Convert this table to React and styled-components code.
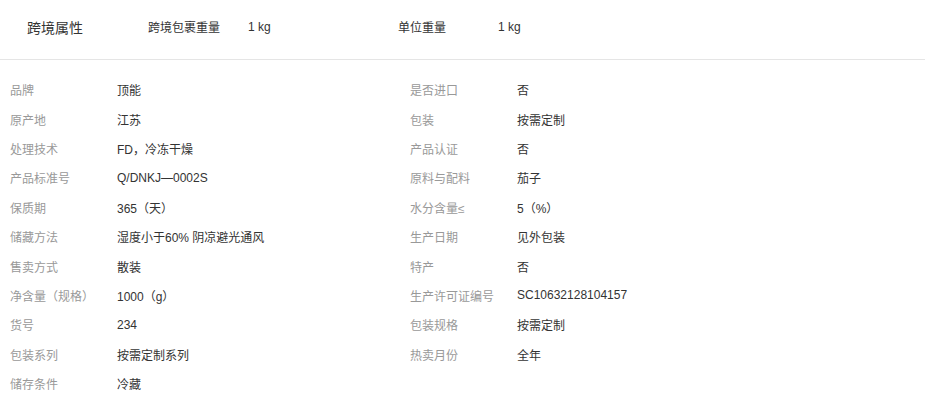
import React from "react";
import styled, { createGlobalStyle } from "styled-components";

const GlobalStyle = createGlobalStyle`
  body {
    margin: 0;
    background: #fff;
    font-family: "Liberation Sans", Arial, "Noto Sans CJK SC", sans-serif;
    color: #333;
  }
`;

const Page = styled.div`
  width: 925px;
`;

const Header = styled.div`
  height: 60px;
  box-sizing: border-box;
  display: flex;
  align-items: center;
  padding: 0 0 6px 27px;
  border-bottom: 1px solid #e5e5e5;
  font-size: 12px;
`;

const Title = styled.div`
  width: 121px;
  font-size: 14px;
  color: #333;
`;

const HeaderLabel = styled.div`
  width: 100px;
  color: #333;
`;

const HeaderValue = styled.div`
  width: 150px;
  color: #333;
`;

const Attrs = styled.div`
  display: grid;
  grid-template-columns: 400px 400px;
  grid-auto-rows: 29.4px;
  padding: 15px 0 0 10px;
  font-size: 12px;
`;

const Cell = styled.div`
  display: flex;
  align-items: center;
`;

const Label = styled.span`
  width: 107px;
  color: #999;
`;

const Value = styled.span`
  color: #333;
`;

const rows = [
  ["品牌", "顶能", "是否进口", "否"],
  ["原产地", "江苏", "包装", "按需定制"],
  ["处理技术", "FD，冷冻干燥", "产品认证", "否"],
  ["产品标准号", "Q/DNKJ—0002S", "原料与配料", "茄子"],
  ["保质期", "365（天）", "水分含量≤", "5（%）"],
  ["储藏方法", "湿度小于60% 阴凉避光通风", "生产日期", "见外包装"],
  ["售卖方式", "散装", "特产", "否"],
  ["净含量（规格）", "1000（g）", "生产许可证编号", "SC10632128104157"],
  ["货号", "234", "包装规格", "按需定制"],
  ["包装系列", "按需定制系列", "热卖月份", "全年"],
  ["储存条件", "冷藏"],
];

export default function App() {
  return (
    <Page>
      <GlobalStyle />
      <Header>
        <Title>跨境属性</Title>
        <HeaderLabel>跨境包裹重量</HeaderLabel>
        <HeaderValue>1 kg</HeaderValue>
        <HeaderLabel>单位重量</HeaderLabel>
        <HeaderValue>1 kg</HeaderValue>
      </Header>
      <Attrs>
        {rows.map((r, i) => (
          <React.Fragment key={i}>
            <Cell>
              <Label>{r[0]}</Label>
              <Value>{r[1]}</Value>
            </Cell>
            <Cell>
              {r[2] && <Label>{r[2]}</Label>}
              {r[3] && <Value>{r[3]}</Value>}
            </Cell>
          </React.Fragment>
        ))}
      </Attrs>
    </Page>
  );
}
